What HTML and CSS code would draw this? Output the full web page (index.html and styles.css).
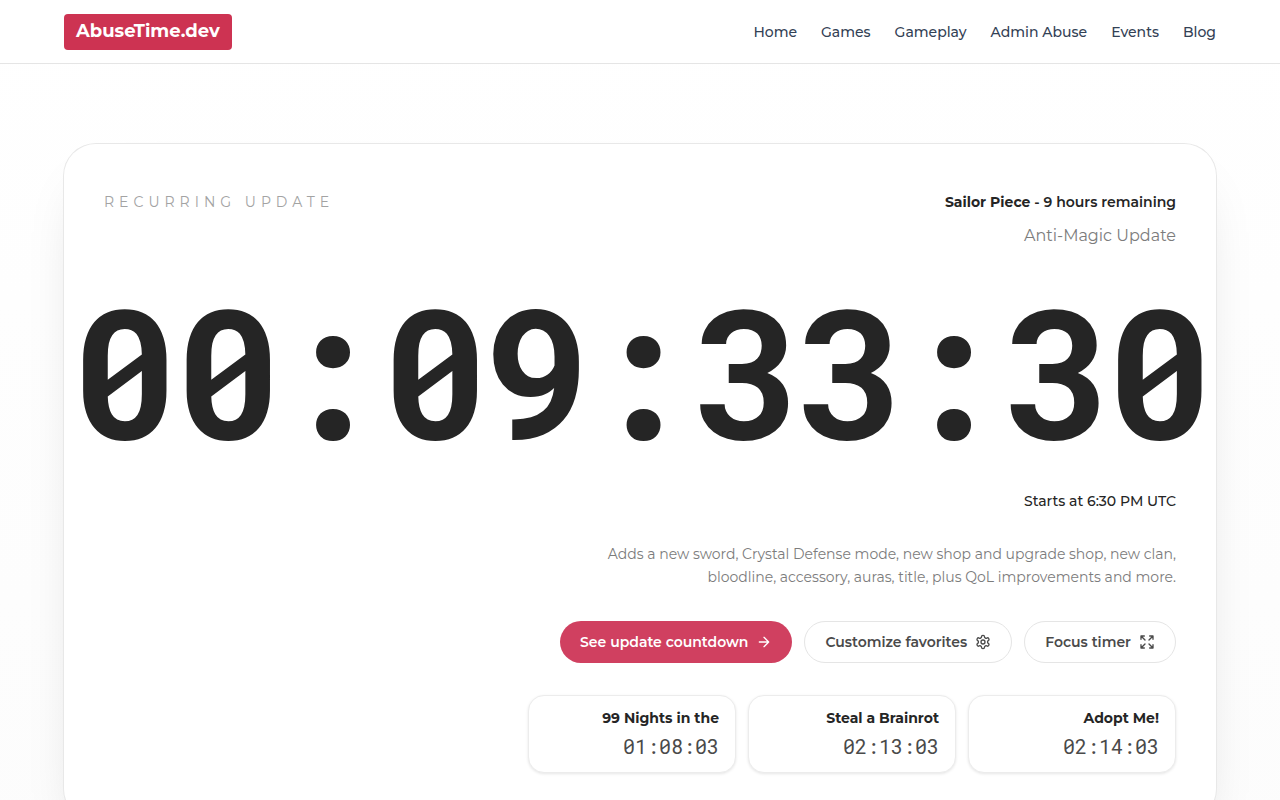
FILE: index.html
```html
<!DOCTYPE html>
<html lang="en">

<head>
    <meta charset="UTF-8">
    <meta name="viewport" content="width=device-width, initial-scale=1.0">
    <title>AbuseTime.dev</title>
    <link rel="stylesheet" href="styles.css">
</head>

<body>
    <header class="site-header">
        <div class="container header-inner">
            <a href="#" class="logo">AbuseTime.dev</a>
            <nav class="nav">
                <a href="#">Home</a>
                <a href="#">Games</a>
                <a href="#">Gameplay</a>
                <a href="#">Admin Abuse</a>
                <a href="#">Events</a>
                <a href="#">Blog</a>
            </nav>
        </div>
    </header>

    <main class="container">
        <section class="hero">
            <div class="hero-top">
                <span class="eyebrow">Recurring update</span>
                <div class="hero-event">
                    <h1><strong>Sailor Piece</strong> - 9 hours remaining</h1>
                    <p>Anti-Magic Update</p>
                </div>
            </div>

            <div class="clock"><span>00:09:33:30</span></div>

            <p class="starts">Starts at 6:30 PM UTC</p>
            <p class="description">Adds a new sword, Crystal Defense mode, new shop and upgrade shop, new clan, bloodline, accessory, auras, title, plus QoL improvements and more.</p>

            <div class="actions">
                <a href="#" class="btn btn-primary">
                    See update countdown
                    <svg class="icon" viewBox="0 0 24 24"><path d="M5 12h14M12 5l7 7-7 7" /></svg>
                </a>
                <button type="button" class="btn">
                    Customize favorites
                    <svg class="icon" viewBox="0 0 24 24">
                        <path d="M12.22 2h-.44a2 2 0 0 0-2 2v.18a2 2 0 0 1-1 1.73l-.43.25a2 2 0 0 1-2 0l-.15-.08a2 2 0 0 0-2.73.73l-.22.38a2 2 0 0 0 .73 2.73l.15.1a2 2 0 0 1 1 1.72v.51a2 2 0 0 1-1 1.74l-.15.09a2 2 0 0 0-.73 2.73l.22.38a2 2 0 0 0 2.73.73l.15-.08a2 2 0 0 1 2 0l.43.25a2 2 0 0 1 1 1.73V20a2 2 0 0 0 2 2h.44a2 2 0 0 0 2-2v-.18a2 2 0 0 1 1-1.73l.43-.25a2 2 0 0 1 2 0l.15.08a2 2 0 0 0 2.73-.73l.22-.39a2 2 0 0 0-.73-2.73l-.15-.08a2 2 0 0 1-1-1.74v-.5a2 2 0 0 1 1-1.74l.15-.09a2 2 0 0 0 .73-2.73l-.22-.38a2 2 0 0 0-2.73-.73l-.15.08a2 2 0 0 1-2 0l-.43-.25a2 2 0 0 1-1-1.73V4a2 2 0 0 0-2-2z" />
                        <circle cx="12" cy="12" r="3" />
                    </svg>
                </button>
                <button type="button" class="btn">
                    Focus timer
                    <svg class="icon" viewBox="0 0 24 24"><path d="m15 15 6 6M15 9l6-6M21 16v5h-5M21 8V3h-5M3 16v5h5M3 21l6-6M3 8V3h5M9 9 3 3" /></svg>
                </button>
            </div>

            <div class="favorites">
                <a href="#" class="favorite">
                    <strong>99 Nights in the</strong>
                    <span>01:08:03</span>
                </a>
                <a href="#" class="favorite">
                    <strong>Steal a Brainrot</strong>
                    <span>02:13:03</span>
                </a>
                <a href="#" class="favorite">
                    <strong>Adopt Me!</strong>
                    <span>02:14:03</span>
                </a>
            </div>
        </section>
    </main>
</body>

</html>
```
FILE: styles.css
```css
* {
    box-sizing: border-box;
}

body {
    margin: 0;
    font-family: Montserrat, Inter, sans-serif;
    font-size: 14px;
    line-height: 20px;
    color: #252525;
    background: linear-gradient(#ffffff, #fcfcfc);
}

h1,
p {
    margin: 0;
}

a {
    color: inherit;
    text-decoration: none;
}

.container {
    max-width: 1280px;
    margin: 0 auto;
    padding: 0 64px;
}

.site-header {
    background: #ffffff;
    border-bottom: 1px solid #e5e5e5;
}

.header-inner {
    display: flex;
    align-items: center;
    justify-content: space-between;
    height: 63px;
}

.logo {
    padding: 3px 12px 5px;
    border-radius: 4px;
    background: #cd3352;
    color: #ffffff;
    font-size: 18px;
    font-weight: 700;
    line-height: 28px;
}

.nav {
    display: flex;
    gap: 24px;
    color: #334155;
    font-weight: 500;
}

.hero {
    margin: 80px 0;
    padding: 48px 40px;
    border-radius: 32px;
    background: #ffffff;
    box-shadow: 0 0 0 1px #e8e8e8, 0 30px 60px -30px rgba(0, 0, 0, 0.25);
    text-align: right;
}

.hero-top {
    display: flex;
    justify-content: space-between;
}

.eyebrow {
    color: #a3a3a3;
    letter-spacing: 5px;
    text-transform: uppercase;
}

.hero-event h1 {
    font-size: 14px;
    font-weight: 600;
}

.hero-event strong {
    font-weight: 700;
}

.hero-event p {
    margin-top: 12px;
    color: #7c7c7c;
    font-size: 16px;
    line-height: 24px;
}

.clock {
    display: flex;
    justify-content: center;
    margin: 31px 0 32px;
    font-family: "Roboto Mono", "DejaVu Sans Mono", monospace;
    font-size: 180px;
    font-weight: 700;
    line-height: 180px;
    letter-spacing: -0.025em;
}

.starts {
    font-weight: 500;
}

.description {
    max-width: 576px;
    margin: 32px 0 0 auto;
    color: #7c7c7c;
    line-height: 23px;
}

.actions {
    display: flex;
    justify-content: flex-end;
    gap: 12px;
    margin-top: 32px;
}

.btn {
    display: flex;
    align-items: center;
    gap: 8px;
    padding: 10px 20px;
    border: 1px solid #e5e5e5;
    border-radius: 21px;
    background: #ffffff;
    color: #4a4a4a;
    font: inherit;
    font-weight: 600;
}

.btn-primary {
    padding: 11px 20px;
    border: 0;
    background: #d04060;
    color: #ffffff;
}

.icon {
    width: 16px;
    height: 16px;
    fill: none;
    stroke: currentColor;
    stroke-width: 2;
    stroke-linecap: round;
    stroke-linejoin: round;
}

.favorites {
    display: grid;
    grid-template-columns: repeat(3, 208px);
    justify-content: flex-end;
    gap: 12px;
    margin-top: 32px;
}

.favorite {
    display: flex;
    flex-direction: column;
    gap: 4px;
    padding: 12px 16px;
    border: 1px solid #ececec;
    border-radius: 16px;
    background: #ffffff;
    box-shadow: 0 1px 3px rgba(0, 0, 0, 0.1);
}

.favorite span {
    color: #4a4a4a;
    font-family: "Roboto Mono", "DejaVu Sans Mono", monospace;
    font-size: 20px;
    line-height: 28px;
}
```
